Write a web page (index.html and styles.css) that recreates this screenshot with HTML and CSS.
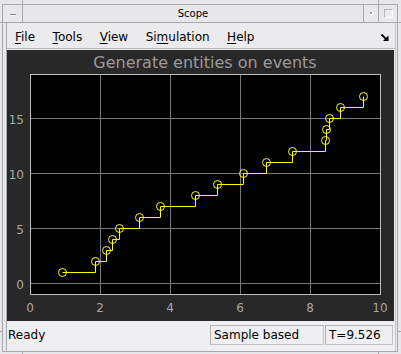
FILE: index.html
```html
<!DOCTYPE html>
<html lang="en">
<head>
    <meta charset="UTF-8">
    <title>Scope</title>
    <link rel="stylesheet" href="styles.css">
</head>
<body>
    <div class="frame">
        <!-- resize handle marks on the window edge -->
        <span class="mark mark-tl"></span>
        <span class="mark mark-tr"></span>
        <span class="mark mark-bl"></span>
        <span class="mark mark-br"></span>
        <span class="mark mark-lt"></span>
        <span class="mark mark-rt"></span>
        <span class="mark mark-lb"></span>
        <span class="mark mark-rb"></span>

        <div class="window">
            <div class="titlebar">
                <div class="tb-btn tb-min"><span class="dash"></span></div>
                <div class="tb-title">Scope</div>
                <div class="tb-btn tb-shade"><span class="dot"></span></div>
                <div class="tb-btn tb-max"><span class="box"></span></div>
            </div>

            <div class="client">
                <div class="menubar">
                    <span class="menu"><u>F</u>ile</span>
                    <span class="menu"><u>T</u>ools</span>
                    <span class="menu"><u>V</u>iew</span>
                    <span class="menu">Si<u>m</u>ulation</span>
                    <span class="menu"><u>H</u>elp</span>
                    <svg class="dock" width="8" height="7" viewBox="0 0 8 7">
                        <path d="M0.5 0.5 L5 5" stroke="#000" stroke-width="1.8"/>
                        <path d="M7.5 1.5 L7.5 7 L2 7 Z" fill="#000"/>
                    </svg>
                </div>

                <div class="plot">
                    <svg width="387" height="271" viewBox="7 50 387 271">
                        <rect x="7" y="50" width="387" height="271" fill="#282828"/>
                        <text class="title" x="205" y="68" text-anchor="middle">Generate entities on events</text>
                        <rect x="30" y="74" width="350" height="220" fill="#000"/>
                        <g class="grid">
                            <path d="M100.5 74 V294 M170.5 74 V294 M240.5 74 V294 M310.5 74 V294"/>
                            <path d="M30 283.5 H380 M30 228.5 H380 M30 173.5 H380 M30 118.5 H380"/>
                        </g>
                        <rect class="axes" x="30.5" y="74.5" width="350" height="220"/>
                        <g class="ticks">
                            <text x="24" y="124" text-anchor="end">15</text>
                            <text x="24" y="179" text-anchor="end">10</text>
                            <text x="24" y="234" text-anchor="end">5</text>
                            <text x="24" y="289" text-anchor="end">0</text>
                            <text x="30" y="312" text-anchor="middle">0</text>
                            <text x="100" y="312" text-anchor="middle">2</text>
                            <text x="170" y="312" text-anchor="middle">4</text>
                            <text x="240" y="312" text-anchor="middle">6</text>
                            <text x="310" y="312" text-anchor="middle">8</text>
                            <text x="380" y="312" text-anchor="middle">10</text>
                        </g>
                        <path class="stairs" d="M62.5 272.5 H95.5 V261.5 H106.5 V250.5 H112.5 V239.5 H119.5 V228.5 H139.5 V217.5 H160.5 V206.5 H195.5 V195.5 H217.5 V184.5 H243.5 V173.5 H266.5 V162.5 H292.5 V151.5 H325.5 V140.5 H326.5 V129.5 H329.5 V118.5 H340.5 V107.5 H363.5 V96.5"/>
                        <g class="marks">
                            <circle cx="62.5" cy="272.5" r="4"/>
                            <circle cx="95.5" cy="261.5" r="4"/>
                            <circle cx="106.5" cy="250.5" r="4"/>
                            <circle cx="112.5" cy="239.5" r="4"/>
                            <circle cx="119.5" cy="228.5" r="4"/>
                            <circle cx="139.5" cy="217.5" r="4"/>
                            <circle cx="160.5" cy="206.5" r="4"/>
                            <circle cx="195.5" cy="195.5" r="4"/>
                            <circle cx="217.5" cy="184.5" r="4"/>
                            <circle cx="243.5" cy="173.5" r="4"/>
                            <circle cx="266.5" cy="162.5" r="4"/>
                            <circle cx="292.5" cy="151.5" r="4"/>
                            <circle cx="325.5" cy="140.5" r="4"/>
                            <circle cx="326.5" cy="129.5" r="4"/>
                            <circle cx="329.5" cy="118.5" r="4"/>
                            <circle cx="340.5" cy="107.5" r="4"/>
                            <circle cx="363.5" cy="96.5" r="4"/>
                        </g>
                    </svg>
                </div>

                <div class="status">
                    <span class="status-msg">Ready</span>
                    <span class="status-box status-mode">Sample based</span>
                    <span class="status-box status-time">T=9.526</span>
                </div>
            </div>
        </div>
    </div>
</body>
</html>
```

FILE: styles.css
```css
html, body {
    margin: 0;
    padding: 0;
}

body {
    font-family: "DejaVu Sans", sans-serif;
    background: #e8e8eb;
    width: 401px;
    height: 354px;
    overflow: hidden;
}

.frame {
    position: relative;
    width: 401px;
    height: 354px;
    padding: 4px 3px 2px 2px;
    box-sizing: border-box;
}

/* small edge marks of the window manager frame */
.mark {
    position: absolute;
    background: #a9a9ad;
}

.mark-tl, .mark-tr, .mark-bl, .mark-br {
    width: 1px;
    height: 4px;
}

.mark-tl { left: 22px; top: 0; }
.mark-tr { left: 378px; top: 0; }
.mark-bl { left: 22px; bottom: 0; height: 3px; }
.mark-br { left: 378px; bottom: 0; height: 3px; }

.mark-lt, .mark-rt, .mark-lb, .mark-rb {
    width: 2px;
    height: 1px;
}

.mark-lt { left: 0; top: 22px; }
.mark-rt { right: 0; top: 22px; width: 3px; }
.mark-lb { left: 0; top: 331px; }
.mark-rb { right: 0; top: 331px; width: 3px; }

.window {
    height: 100%;
    box-sizing: border-box;
    border: 1px solid #a9a9ad;
    display: flex;
    flex-direction: column;
}

.titlebar {
    height: 17px;
    border-bottom: 1px solid #a9a9ad;
    display: flex;
    background: #e8e8eb;
}

.tb-btn {
    display: flex;
    align-items: center;
    justify-content: center;
}

.tb-min {
    width: 19px;
    border-right: 1px solid #a9a9ad;
}

.tb-min .dash {
    width: 6px;
    height: 1px;
    background: #8a8a8e;
    border-bottom: 1px solid #fff;
    margin-top: 2px;
}

.tb-title {
    flex: 1;
    text-align: center;
    font-size: 10px;
    line-height: 17px;
    color: #000;
}

.tb-shade {
    width: 14px;
    border-left: 1px solid #a9a9ad;
    border-right: 1px solid #a9a9ad;
}

.tb-shade .dot {
    width: 2px;
    height: 2px;
    background: #9a9a9e;
    border-right: 1px solid #fff;
    border-bottom: 1px solid #fff;
}

.tb-max {
    width: 18px;
}

.tb-max .box {
    width: 7px;
    height: 7px;
    border: 1px solid #b5b5b9;
    border-right-color: #fff;
    border-bottom-color: #fff;
    background: #ececef;
}

.client {
    flex: 1;
    margin: 0 1px 0 3px;
    border-left: 1px solid #a9a9ad;
    border-right: 1px solid #c8c8cc;
    display: flex;
    flex-direction: column;
    background: #ebebee;
}

.menubar {
    height: 26px;
    box-sizing: border-box;
    padding: 3px 0 0 8px;
    border-bottom: 1px solid #b8b8bc;
    margin-bottom: 1px;
    display: flex;
    align-items: center;
    gap: 17.5px;
    font-size: 12px;
    color: #000;
}

.menu u {
    text-decoration-thickness: 1px;
    text-underline-offset: 2px;
}

.dock {
    margin-left: auto;
    margin-right: 6px;
}

.plot {
    height: 271px;
    line-height: 0;
}

.plot .title {
    font-family: "DejaVu Sans", sans-serif;
    font-size: 16px;
    fill: #9a9a9a;
}

.grid path {
    stroke: #7a7a7a;
    stroke-width: 1;
    fill: none;
}

.axes {
    fill: none;
    stroke: #bdbdbd;
    stroke-width: 1;
}

.ticks text {
    font-family: "DejaVu Sans", sans-serif;
    font-size: 12px;
    fill: #a8a8a8;
}

.stairs {
    fill: none;
    stroke: #ffff00;
    stroke-width: 1;
}

.marks circle {
    fill: none;
    stroke: #ffff00;
    stroke-width: 1;
}

.status {
    flex: 1;
    display: flex;
    align-items: flex-start;
    padding-top: 4px;
    font-size: 12px;
    color: #000;
    background: #efeff1;
}

.status-msg {
    flex: 1;
    padding-left: 1px;
    line-height: 20px;
}

.status-box {
    height: 18px;
    line-height: 18px;
    border: 1px solid #c4c4c8;
    border-top-color: #b0b0b4;
    border-left-color: #b0b0b4;
    padding-left: 3px;
    box-sizing: content-box;
}

.status-mode {
    width: 109px;
    margin-right: 1px;
}

.status-time {
    width: 63px;
    margin-right: 2px;
}
```
